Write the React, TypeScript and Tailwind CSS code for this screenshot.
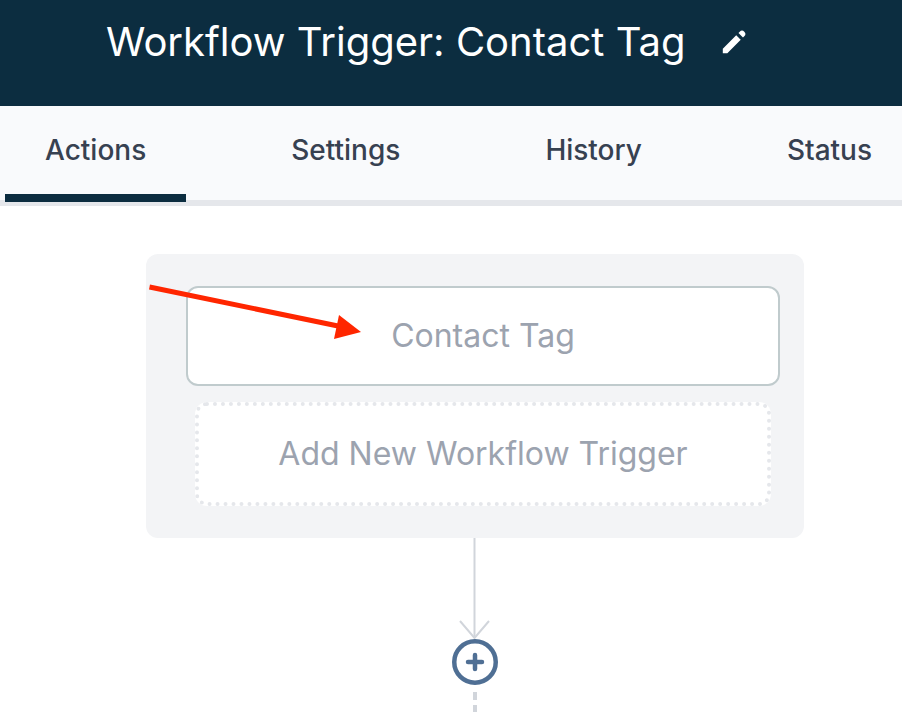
import React, { useState } from "react";

const TABS = ["Actions", "Settings", "History", "Status"];

const PencilIcon: React.FC = () => (
  <svg className="w-8 h-8" viewBox="0 0 20 20" fill="currentColor" aria-hidden="true">
    <path d="M13.586 3.586a2 2 0 1 1 2.828 2.828l-.793.793-2.828-2.828.793-.793zM11.379 5.793L3 14.172V17h2.828l8.38-8.379-2.83-2.828z" />
  </svg>
);

const Header: React.FC<{ title: string }> = ({ title }) => (
  <header className="flex items-start h-[106px] pl-[106px] pt-3 gap-8 bg-[#0c2d40] text-white">
    <h1 className="text-[40px] leading-[60px] whitespace-nowrap">{title}</h1>
    <button type="button" aria-label="Edit title" className="flex items-center h-[60px]">
      <PencilIcon />
    </button>
  </header>
);

const TabBar: React.FC<{ active: string; onSelect: (tab: string) => void }> = ({
  active,
  onSelect,
}) => (
  <nav className="relative h-[100px] overflow-hidden bg-[#f9fafc]">
    <div className="flex items-stretch h-24 gap-[65px] pl-[5px]">
      {TABS.map((tab) => (
        <a
          key={tab}
          href={`#${tab.toLowerCase()}`}
          onClick={() => onSelect(tab)}
          className={`relative z-10 flex-none px-10 pt-6 text-[28px] leading-[40px] font-medium text-[#374151] border-b-8 ${
            tab === active ? "border-[#0c2d40]" : "border-transparent"
          }`}
        >
          {tab}
        </a>
      ))}
    </div>
    {/* track under the tabs, the active marker overlaps it */}
    <div className="absolute inset-x-0 bottom-0 h-[6px] bg-[#e5e7eb]" />
  </nav>
);

const PointerArrow: React.FC = () => (
  <svg
    className="absolute left-0 top-6 pointer-events-none"
    width="220"
    height="70"
    viewBox="0 0 220 70"
    fill="#ff2600"
    aria-hidden="true"
  >
    <path d="M3.5 9 L192 48" stroke="#ff2600" strokeWidth="5" />
    <path d="M193 37 L215 54 L188 61 Z" />
  </svg>
);

const Connector: React.FC = () => (
  <svg width="60" height="101" viewBox="0 0 60 101" fill="none" stroke="#d1d5db" strokeWidth="2" aria-hidden="true">
    <path d="M29.5 0 V100" />
    <path d="M15 83 L29.5 100 L44 83" />
  </svg>
);

const App: React.FC = () => {
  const [activeTab, setActiveTab] = useState("Actions");

  return (
    <div className="min-h-screen bg-white font-['Inter',sans-serif]">
      <Header title="Workflow Trigger: Contact Tag" />
      <TabBar active={activeTab} onSelect={setActiveTab} />

      <main className="flex flex-col items-center pt-12 pl-12">
        <section className="relative flex flex-col w-full max-w-[658px] gap-4 py-8 pl-10 pr-6 rounded-xl bg-[#f3f4f6]">
          <button
            type="button"
            className="h-[100px] text-[32px] leading-[40px] text-[#9ca3af] bg-white border-2 border-[#c0cbcd] rounded-xl"
          >
            Contact Tag
          </button>
          <button
            type="button"
            className="h-[104px] mx-[9px] text-[32px] leading-[40px] text-[#9ca3af] bg-white border-4 border-dotted border-[#e5e7eb] rounded-xl"
          >
            Add New Workflow Trigger
          </button>
          <PointerArrow />
        </section>

        <Connector />
        <button type="button" aria-label="Add action">
          <svg width="46" height="46" viewBox="0 0 46 46" fill="none" stroke="#4f6f94" strokeLinecap="round">
            <circle cx="23" cy="23" r="20.75" strokeWidth="4.5" />
            <path d="M23 16 V30 M16 23 H30" strokeWidth="4.5" />
          </svg>
        </button>
        <svg className="mt-[7px]" width="4" height="20" viewBox="0 0 4 20" stroke="#d1d5db" strokeWidth="4" aria-hidden="true">
          <path d="M2 0 V20" strokeDasharray="8 5" />
        </svg>
      </main>
    </div>
  );
};

export default App;
